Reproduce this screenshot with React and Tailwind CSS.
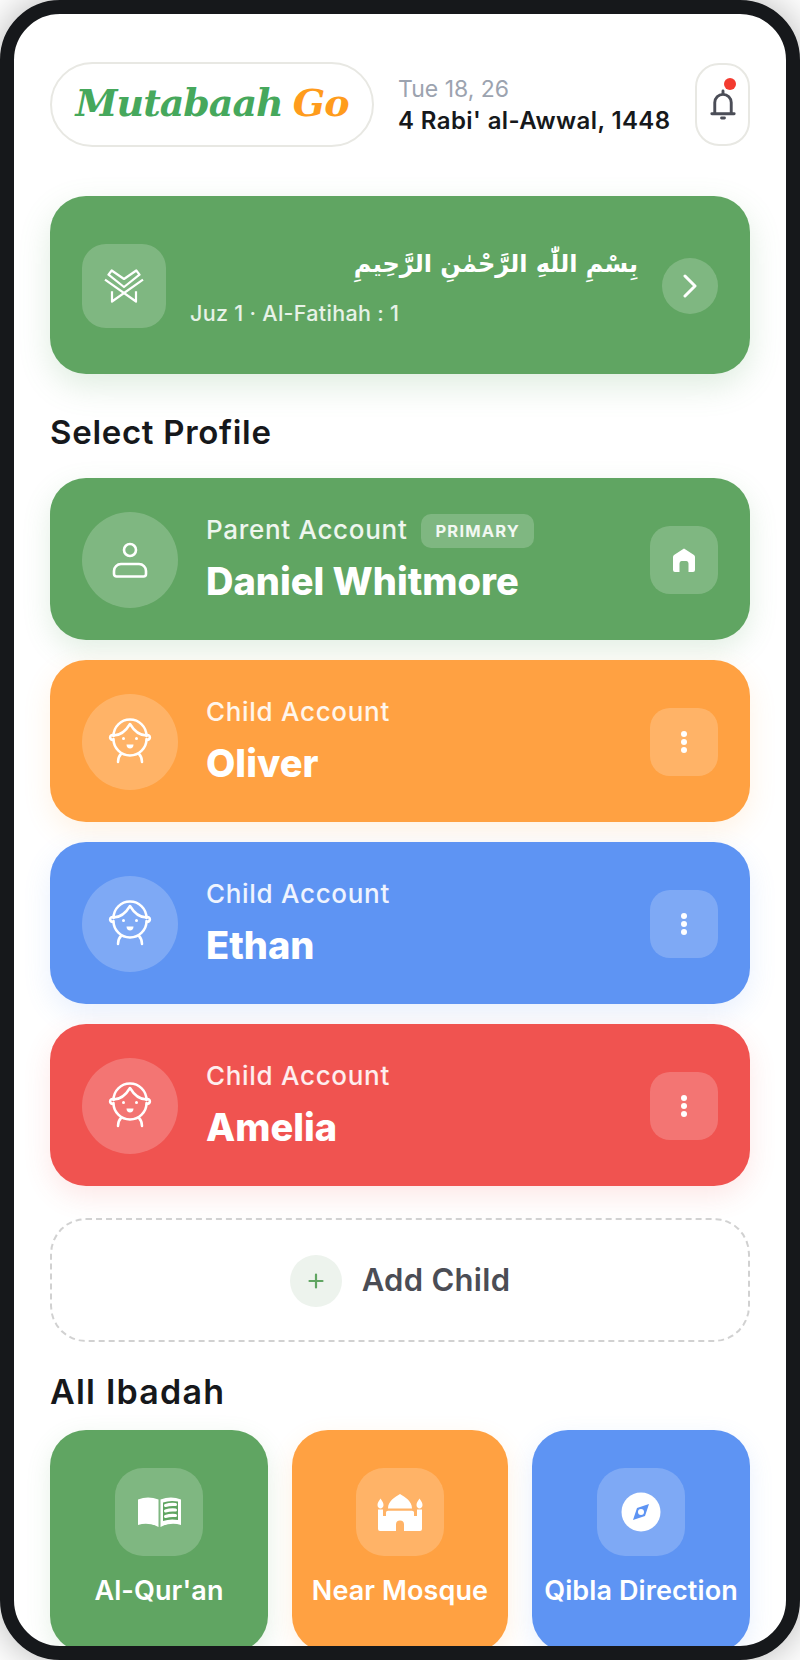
const FONT = "font-['Inter','Noto_Sans',sans-serif]";

function ChildIcon() {
  return (
    <svg width="48" height="48" viewBox="0 0 48 48" fill="none" stroke="white" strokeWidth="2.5" strokeLinecap="round" strokeLinejoin="round">
      <path d="M7.5 18a16.5 16.5 0 0 1 33 0" />
      <path d="M7.5 21a16.5 16.5 0 0 0 33 0" />
      <path d="M7.5 17.5c6 0 12-4 16.5-11.5 4.5 7.5 10.5 11.5 16.5 11.5" />
      <path d="M7.5 17c-3.5-.5-5 3.5-1 5M40.5 17c3.5-.5 5 3.5 1 5" />
      <path d="M15 36c-2 2-3 5-3 8M33 36c2 2 3 5 3 8" />
      <circle cx="17.5" cy="20.5" r="1.5" fill="white" stroke="none" />
      <circle cx="30.5" cy="20.5" r="1.5" fill="white" stroke="none" />
      <path d="M20.5 26.5h7c0 2.5-1.5 4-3.5 4s-3.5-1.5-3.5-4z" fill="white" stroke="none" />
    </svg>
  );
}

function PersonIcon() {
  return (
    <svg width="48" height="48" viewBox="0 0 48 48" fill="none" stroke="white" strokeWidth="2.6">
      <circle cx="24" cy="14" r="6" />
      <path d="M15 28h18a7 7 0 0 1 7 7v3a2.5 2.5 0 0 1-2.5 2.5h-27A2.5 2.5 0 0 1 8 38v-3a7 7 0 0 1 7-7z" />
    </svg>
  );
}

function HomeIcon() {
  return (
    <svg width="24" height="24" viewBox="0 0 24 24" fill="white">
      <path d="M12 .5 22 7q1 .8 1 2v13q0 2-2 2h-4.5v-8.5q0-2.5-2-2.5h-5q-2 0-2 2.5V24H3q-2 0-2-2V9q0-1.2 1-2z" />
    </svg>
  );
}

function DotsIcon() {
  return (
    <svg width="8" height="24" viewBox="0 0 8 24" fill="white">
      <circle cx="4" cy="4" r="3" />
      <circle cx="4" cy="12" r="3" />
      <circle cx="4" cy="20" r="3" />
    </svg>
  );
}

function QuranIcon() {
  return (
    <svg width="40" height="34" viewBox="0 0 40 34" fill="none" stroke="white" strokeWidth="2.2" strokeLinejoin="round">
      <path d="M4.5 5.7 7.7 1.5 20 10 32.3 1.5 35.5 5.7 20 18z" />
      <path d="M1 10.7 32 32.5V22.3" />
      <path d="M39 10.7 8 32.5V22.3" />
    </svg>
  );
}

function BookIcon() {
  return (
    <svg width="43" height="31" viewBox="0 0 43 31" fill="white">
      <path d="M0 2.5Q10-1.5 20.5 2.5V30Q10 24.5 0 28z" />
      <path d="M22.5 2.5Q33-1.5 43 2.5V28Q33 24.5 22.5 30z" />
      <path d="M25 5.5Q32 3 40 4.5V23Q32 21.5 25 24z" fill="#60a562" />
      <g stroke="white" strokeWidth="3" strokeLinecap="round" fill="none">
        <path d="M27.5 8.5Q32 7 37.5 7.5M27.5 14Q32 12.5 37.5 13M27.5 19.5Q32 18 37.5 18.5" />
      </g>
    </svg>
  );
}

function MosqueIcon() {
  return (
    <svg width="50" height="37" viewBox="0 0 50 37" fill="white">
      <path d="M25 0C30 3 37 7 37 14.5H13C13 7 20 3 25 0z" />
      <path d="M5.5 4.5C7 7 8.500 8.500 8.500 11 8.500 13 7 14.500 5.500 14.500 4 14.500 2.500 13 2.500 11 2.500 8.500 4 7 5.500 4.500z" />
      <path d="M44.500 4.500C46 7 47.500 8.500 47.500 11 47.500 13 46 14.500 44.500 14.500 43 14.500 41.500 13 41.500 11 41.500 8.500 43 7 44.500 4.500z" />
      <path d="M3 15.500H8V22H11V18.500Q11 16.700 13 16.700H37Q39 16.700 39 18.500V22H42V15.500H47V35Q47 37 45 37H29V30.500a4 4 0 0 0-8 0V37H5Q3 37 3 35z" />
    </svg>
  );
}

function CompassIcon() {
  return (
    <svg width="40" height="40" viewBox="0 0 40 40">
      <circle cx="20" cy="20" r="19.5" fill="white" />
      <path d="M28 12 24 24 12 28l4-12z" fill="#5e94f3" />
      <circle cx="20" cy="20" r="3" fill="white" />
    </svg>
  );
}

const PROFILES = [
  { type: "Parent Account", name: "Daniel Whitmore", card: "bg-[#60a562] shadow-[0_10px_28px_rgba(97,166,99,0.18)]", icon: <PersonIcon />, action: <HomeIcon />, primary: true },
  { type: "Child Account", name: "Oliver", card: "bg-[#ffa142] shadow-[0_10px_28px_rgba(255,161,66,0.14)]", icon: <ChildIcon />, action: <DotsIcon /> },
  { type: "Child Account", name: "Ethan", card: "bg-[#5e94f3] shadow-[0_10px_28px_rgba(94,148,243,0.14)]", icon: <ChildIcon />, action: <DotsIcon /> },
  { type: "Child Account", name: "Amelia", card: "bg-[#f05350] shadow-[0_10px_28px_rgba(241,84,81,0.14)]", icon: <ChildIcon />, action: <DotsIcon /> },
];

const IBADAH = [
  { label: "Al-Qur'an", card: "bg-[#60a562] shadow-[0_8px_24px_rgba(97,166,99,0.16)]", icon: <BookIcon /> },
  { label: "Near Mosque", card: "bg-[#ffa142] shadow-[0_8px_24px_rgba(255,161,66,0.14)]", icon: <MosqueIcon /> },
  { label: "Qibla Direction", card: "bg-[#5e94f3] shadow-[0_8px_24px_rgba(94,148,243,0.14)]", icon: <CompassIcon /> },
];

function ProfileCard({ p }) {
  return (
    <div className={"h-[162px] rounded-[36px] flex items-center px-8 pt-[2px] " + p.card}>
      <div className="w-24 h-24 rounded-full bg-white/20 flex items-center justify-center shrink-0">{p.icon}</div>
      <div className="ml-7 flex-1 min-w-0 text-white">
        <div className="flex items-center gap-[14px] h-[34px]">
          <span className="text-[26px] font-medium leading-[34px] text-white/90 tracking-[0.7px]">{p.type}</span>
          {p.primary && (
            <span className="h-[34px] mt-[2px] px-[14px] rounded-[10px] bg-white/20 text-[16.5px] font-bold tracking-[1.2px] text-white/90 flex items-center">PRIMARY</span>
          )}
        </div>
        <div className="mt-[8px] text-[38px] font-extrabold leading-[52px]">{p.name}</div>
      </div>
      <div className="w-[68px] h-[68px] rounded-[20px] bg-white/20 flex items-center justify-center shrink-0">{p.action}</div>
    </div>
  );
}

export default function App() {
  return (
    <div className={"w-[800px] h-[1660px] bg-white " + FONT}>
      <div className="w-full h-full box-border border-[14px] border-[#16181b] rounded-[60px] overflow-hidden bg-white shadow-[0_0_40px_rgba(0,0,0,0.3)]">
        <div className="px-9 pt-12 flex flex-col">
          {/* header */}
          <div className="flex items-center h-[85px]">
            <div className="w-[324px] h-[85px] pb-[4px] shrink-0 rounded-full border-2 border-[#e8e8e3] flex items-center justify-center gap-[10px] font-['DejaVu_Serif',serif] italic font-bold text-[38px] tracking-[-1px]">
              <span className="text-[#46a85c]">Mutabaah</span>
              <span className="text-[#ff9c1c]">Go</span>
            </div>
            <div className="ml-[24px] flex-1 min-w-0">
              <div className="text-[23px] leading-8 text-[#9ca3af]">Tue 18, 26</div>
              <div className="text-[24px] leading-8 font-semibold tracking-[0.4px] text-[#16181b] whitespace-nowrap">4 Rabi' al-Awwal, 1448</div>
            </div>
            <div className="relative w-[55px] h-[83px] shrink-0 rounded-[24px] border-2 border-[#e8e8e3] flex items-center justify-center">
              <svg width="26" height="31" viewBox="0 0 26 32" fill="none" stroke="#4b4d57" strokeWidth="3" strokeLinecap="round">
                <path d="M4.5 25V14a8.5 8.5 0 0 1 17 0v11" />
                <path d="M1.5 25.5h23" />
                <path d="M13 2v3M11.5 30h3" strokeWidth="3" />
              </svg>
              <span className="absolute top-[13px] left-[27px] w-3 h-3 rounded-full bg-[#f33b30]" />
            </div>
          </div>

          {/* ayah banner */}
          <div className="mt-[49px] h-[178px] pt-[2px] rounded-[36px] bg-[#60a562] shadow-[0_12px_32px_rgba(97,166,99,0.2)] flex items-center px-8">
            <div className="w-[84px] h-[84px] rounded-[24px] bg-white/20 flex items-center justify-center shrink-0">
              <QuranIcon />
            </div>
            <div className="ml-6 flex-1 min-w-0 pb-[4px]">
              <div dir="rtl" className="text-[24px] leading-[44px] font-bold text-white font-['DejaVu_Sans',sans-serif]">بِسْمِ اللّٰهِ الرَّحْمٰنِ الرَّحِيمِ</div>
              <div className="mt-[13px] text-[21.5px] leading-7 font-medium tracking-[0.3px] text-white/85">Juz 1 · Al-Fatihah : 1</div>
            </div>
            <div className="ml-6 w-14 h-14 rounded-full bg-white/20 flex items-center justify-center shrink-0">
              <svg width="14" height="24" viewBox="0 0 14 24" fill="none" stroke="white" strokeWidth="3" strokeLinecap="round" strokeLinejoin="round">
                <path d="M2 2l10 10L2 22" />
              </svg>
            </div>
          </div>

          <h2 className="mt-[34px] text-[33px] leading-[48px] font-semibold tracking-[0.7px] text-[#16181b]">Select Profile</h2>

          <div className="mt-[22px] flex flex-col gap-5">
            {PROFILES.map((p) => <ProfileCard key={p.name} p={p} />)}
          </div>

          {/* add child */}
          <div className="mt-8 h-[124px] pt-[1px] rounded-[36px] border-2 border-dashed border-[#d1d1d1] flex items-center justify-center gap-5">
            <div className="w-[52px] h-[52px] rounded-full bg-[#edf3ed] flex items-center justify-center">
              <svg width="16" height="16" viewBox="0 0 16 16" stroke="#60a562" strokeWidth="2.2" strokeLinecap="round">
                <path d="M8 1.5v13M1.5 8h13" />
              </svg>
            </div>
            <span className="text-[31px] font-semibold tracking-[0.3px] text-[#4b4d55]">Add Child</span>
          </div>

          <h2 className="mt-[26px] text-[34px] leading-[48px] font-semibold tracking-[1.2px] text-[#16181b]">All Ibadah</h2>

          <div className="mt-[14px] grid grid-cols-[218px_216px_218px] gap-6">
            {IBADAH.map((it) => (
              <div key={it.label} className={"h-[222px] rounded-[36px] flex flex-col items-center pt-[38px] " + it.card}>
                <div className="w-[88px] h-[88px] rounded-[28px] bg-white/20 flex items-center justify-center">{it.icon}</div>
                <div className="mt-4 text-[27px] leading-[38px] font-semibold tracking-[0.1px] text-white whitespace-nowrap">{it.label}</div>
              </div>
            ))}
          </div>
        </div>
      </div>
    </div>
  );
}
